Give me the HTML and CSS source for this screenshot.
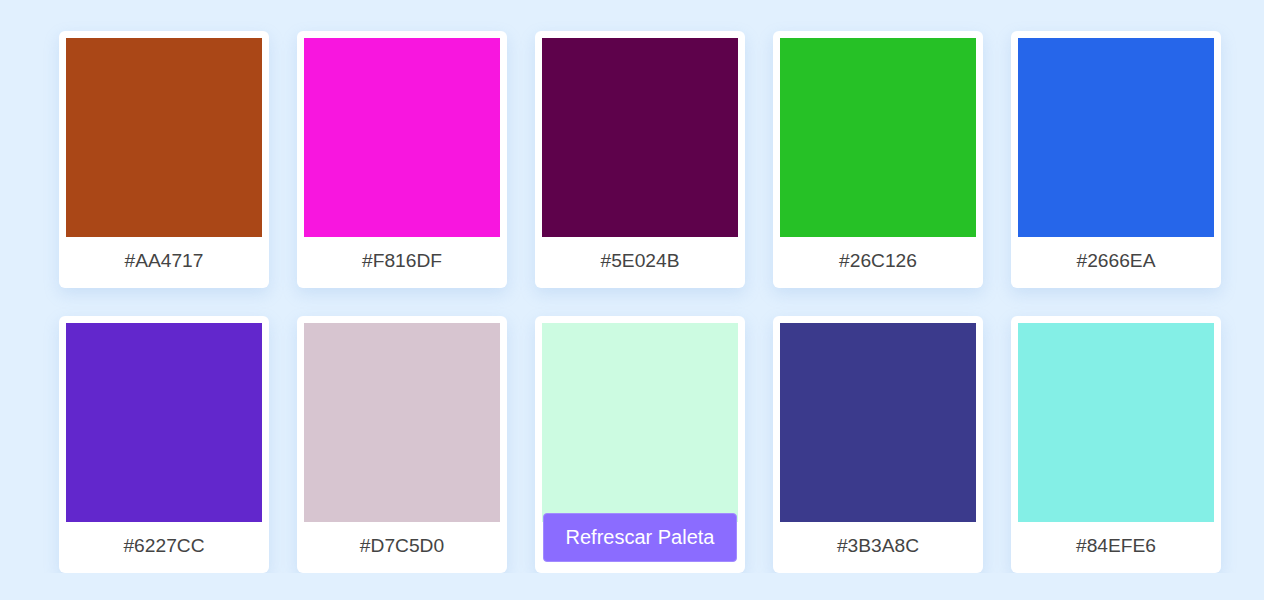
FILE: index.html
```html
<!DOCTYPE html>
<html lang="es">
<head>
<meta charset="utf-8">
<title>Paleta de colores</title>
<link rel="stylesheet" href="styles.css">
</head>
<body>
<main class="palette">
  <div class="card"><div class="swatch" style="background:#AA4717"></div><p class="code">#AA4717</p></div>
  <div class="card"><div class="swatch" style="background:#F816DF"></div><p class="code">#F816DF</p></div>
  <div class="card"><div class="swatch" style="background:#5E024B"></div><p class="code">#5E024B</p></div>
  <div class="card"><div class="swatch" style="background:#26C126"></div><p class="code">#26C126</p></div>
  <div class="card"><div class="swatch" style="background:#2666EA"></div><p class="code">#2666EA</p></div>
  <div class="card"><div class="swatch" style="background:#6227CC"></div><p class="code">#6227CC</p></div>
  <div class="card"><div class="swatch" style="background:#D7C5D0"></div><p class="code">#D7C5D0</p></div>
  <div class="card card-action"><div class="swatch" style="background:#CCFBE1"></div><p class="code">#CCFBE1</p><button class="refresh">Refrescar Paleta</button></div>
  <div class="card"><div class="swatch" style="background:#3B3A8C"></div><p class="code">#3B3A8C</p></div>
  <div class="card"><div class="swatch" style="background:#84EFE6"></div><p class="code">#84EFE6</p></div>
</main>
</body>
</html>
```
FILE: styles.css
```css
html, body {
  margin: 0;
  padding: 0;
  background: #e1f0fe;
  font-family: "Liberation Sans", Arial, sans-serif;
}

.palette {
  display: grid;
  grid-template-columns: repeat(5, 210px);
  gap: 28px;
  justify-content: center;
  padding: 31px 0 0 16px;
}

.card {
  position: relative;
  background: #ffffff;
  border-radius: 6px;
  padding: 7px 7px 0;
  box-shadow: 0 6px 16px rgba(120, 165, 225, 0.22);
}

.swatch {
  height: 199px;
}

.code {
  margin: 0;
  height: 51px;
  line-height: 47px;
  text-align: center;
  font-size: 19.2px;
  color: #444444;
}

.card-action .code {
  visibility: hidden;
}

.refresh {
  position: absolute;
  left: 8px;
  right: 8px;
  bottom: 11px;
  height: 49px;
  border: 1px solid #a28bff;
  border-radius: 4px;
  background: #8b6cff;
  color: #ffffff;
  font-family: "Liberation Sans", Arial, sans-serif;
  font-size: 20px;
  cursor: pointer;
}
```
